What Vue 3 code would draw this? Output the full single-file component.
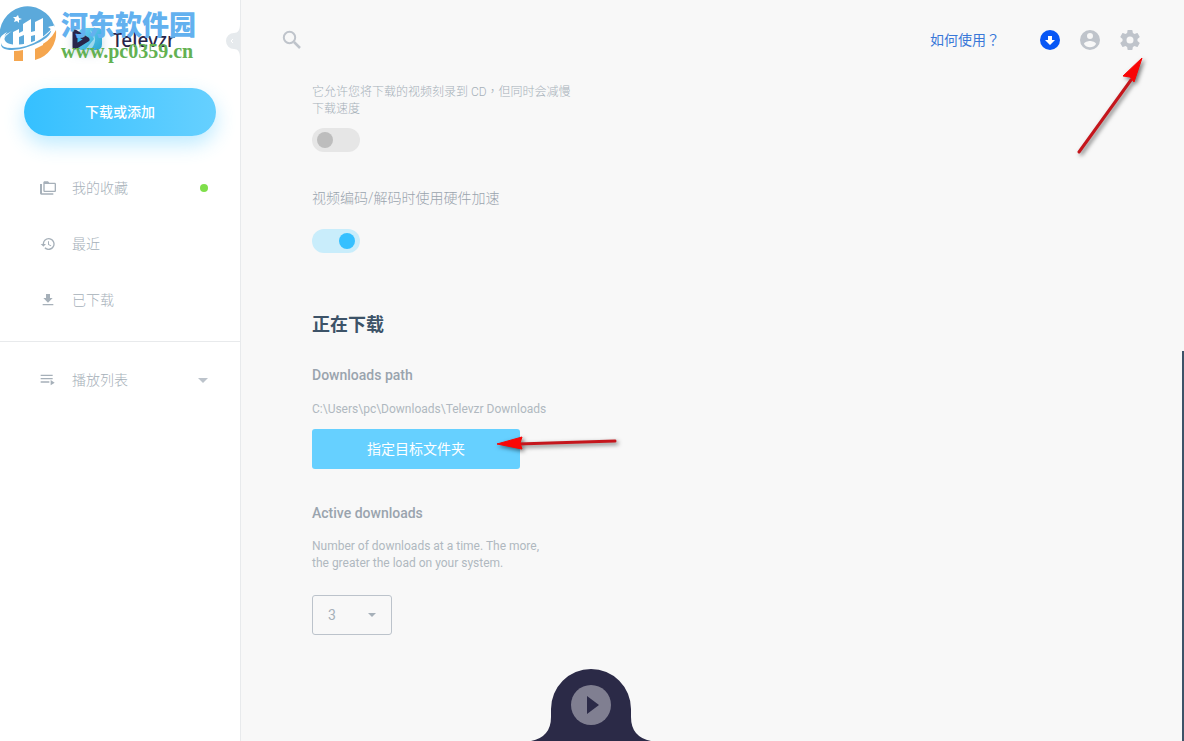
<script setup>
import { ref } from 'vue'

const burnToDisc = ref(false)
const hardware = ref(true)
const active = ref(3)
</script>

<template>
  <div class="app">
    <aside class="sidebar">
      <div class="brand">
        <svg class="brand-mark" viewBox="0 0 40 40" aria-hidden="true">
          <defs>
            <linearGradient id="mark" x1="0" y1="0" x2="1" y2="1">
              <stop offset="0" stop-color="#6fd3f8" />
              <stop offset="1" stop-color="#2aa5cf" />
            </linearGradient>
          </defs>
          <path d="M18 8h12q4 0 4 4v12q0 6-6 6H14q-4 0-4-4V16q0-8 8-8z" fill="url(#mark)" />
          <path d="M22 10q9 8 2 18-2 2-7 2l9-11z" fill="#d8f0f8" opacity=".6" />
          <path d="M7 12v15l12-7.500z" fill="#36b8ee" stroke="#29264a" stroke-width="5" stroke-linejoin="round" />
        </svg>
        <span class="brand-name">Televzr</span>
      </div>

      <button class="add" type="button">下载或添加</button>

      <nav class="nav">
        <a class="item" href="#collection">
          <svg viewBox="0 0 24 24"><path d="M3 6H0v14c0 1.100.9 2 2 2h18v-2H3V6zm19-2h-8l-2-2H7c-1.100 0-2 .9-2 2v12c0 1.100.9 2 2 2h15c1.100 0 2-.9 2-2V6c0-1.100-.9-2-2-2zm0 12H7V6h15v10z" /></svg>
          <span>我的收藏</span><i class="dot"></i>
        </a>
        <a class="item" href="#recent">
          <svg viewBox="0 0 24 24"><path d="M13 3a9 9 0 0 0-9 9H1l3.890 3.890.07.14L9 12H6a7 7 0 1 1 2.060 4.940l-1.420 1.420A9 9 0 1 0 13 3zm-1 5v5l4.280 2.540.72-1.210-3.500-2.080V8H12z" /></svg>
          <span>最近</span>
        </a>
        <a class="item" href="#downloaded">
          <svg viewBox="0 0 24 24"><path d="M19 9h-4V3H9v6H5l7 7 7-7zM4 18v2h16v-2H4z" /></svg>
          <span>已下载</span>
        </a>
      </nav>
      <nav class="nav lists">
        <a class="item" href="#playlists">
          <svg viewBox="0 0 24 24"><path d="M1 4h18v2H1zM1 9h18v2H1zM1 14h13v2H1zM16 12l6 4-6 4z" /></svg>
          <span>播放列表</span>
          <svg class="caret" viewBox="0 0 10 5"><path d="M0 0h10L5 5z" /></svg>
        </a>
      </nav>

      <button class="collapse" type="button" aria-label="Collapse">
        <svg viewBox="0 0 16 34"><path d="M16 0c0 6-2 9-6 9a8 8 0 1 0 0 16c4 0 6 3 6 9z" fill="#e6eaed" /><path d="M9 15l-2 2 2 2" fill="none" stroke="#fff" stroke-width="1" /></svg>
      </button>
    </aside>

    <main class="main">
      <header class="top">
        <button class="icon" type="button" aria-label="Search">
          <svg viewBox="0 0 24 24"><g fill="none" stroke="currentColor" stroke-width="2"><circle cx="9.500" cy="9.500" r="5.700" /><path d="M14 14l6 6" stroke-width="2.500" /></g></svg>
        </button>
        <div class="tools">
          <a class="help" href="#help">如何使用<span class="mid">？</span></a>
          <button class="icon" type="button" aria-label="Downloads">
            <svg viewBox="0 0 24 24"><circle cx="12" cy="12" r="10" fill="#0757f5" /><path d="M10 8h4v4h3l-5 5-5-5h3z" fill="#fff" /></svg>
          </button>
          <button class="icon" type="button" aria-label="Account">
            <svg viewBox="0 0 24 24"><path d="M12 2a10 10 0 1 0 0 20 10 10 0 0 0 0-20zm0 3a3 3 0 1 1 0 6 3 3 0 0 1 0-6zm0 14.200a7.200 7.200 0 0 1-6-3.220c.03-1.990 4-3.080 6-3.080s5.970 1.090 6 3.080a7.200 7.200 0 0 1-6 3.220z" /></svg>
          </button>
          <button class="icon" type="button" aria-label="Settings">
            <svg viewBox="0 0 24 24"><path d="M19.430 12.980c.04-.32.07-.64.07-.98s-.03-.66-.07-.98l2.110-1.650c.19-.15.24-.42.12-.64l-2-3.460c-.12-.22-.39-.3-.61-.22l-2.490 1c-.52-.4-1.080-.73-1.690-.98l-.38-2.650A.488.488 0 0 0 14 2h-4c-.25 0-.46.18-.49.42l-.38 2.650c-.61.25-1.170.59-1.690.98l-2.490-1c-.23-.09-.49 0-.61.22l-2 3.460c-.13.22-.07.49.12.64l2.110 1.650c-.04.32-.07.65-.07.98s.03.66.07.98l-2.110 1.650c-.19.15-.24.42-.12.64l2 3.460c.12.22.39.3.61.22l2.490-1c.52.4 1.080.73 1.690.98l.38 2.650c.03.24.24.42.49.42h4c.25 0 .46-.18.49-.42l.38-2.650c.61-.25 1.170-.59 1.690-.98l2.490 1c.23.09.49 0 .61-.22l2-3.460c.12-.22.07-.49-.12-.64l-2.110-1.650zM12 15.500a3.500 3.500 0 1 1 0-7 3.500 3.500 0 0 1 0 7z" /></svg>
          </button>
        </div>
        <svg class="arrow-up" viewBox="0 0 80 110" aria-hidden="true">
          <path d="M7 98L59 26" stroke="#c5161c" stroke-width="3" stroke-linecap="round" />
          <path d="M70 4L51 22l7 1 4 5z" fill="#f80606" stroke="#f80606" />
        </svg>
      </header>

      <section class="settings">
        <label class="note" for="burn">它允许您将下载的视频刻录到 CD<span class="mid">，</span>但同时会减慢下载速度</label>
        <input id="burn" v-model="burnToDisc" class="switch" type="checkbox" />
        <label class="name first" for="hw">视频编码/解码时使用硬件加速</label>
        <input id="hw" v-model="hardware" class="switch second" type="checkbox" />

        <h2>正在下载</h2>
        <h3 class="name">Downloads path</h3>
        <p class="note path">C:\Users\pc\Downloads\Televzr Downloads</p>
        <div class="target">
          <button class="choose" type="button">指定目标文件夹</button>
          <svg class="arrow-left" viewBox="0 0 130 24" aria-hidden="true">
            <path d="M22 12L119 9" stroke="#c5161c" stroke-width="3" stroke-linecap="round" />
            <path d="M1 12L26 5l-2 6 2 6z" fill="#f80606" stroke="#f80606" />
          </svg>
        </div>
        <label class="name active" for="count">Active downloads</label>
        <p class="note narrow">Number of downloads at a time. The more, the greater the load on your system.</p>
        <div class="pick">
          <select id="count" v-model="active">
            <option v-for="n in 5" :key="n" :value="n">{{ n }}</option>
          </select>
          <svg viewBox="0 0 8 4" aria-hidden="true"><path d="M0 0h8L4 4z" /></svg>
        </div>
      </section>
    </main>

    <div class="scroll"></div>

    <button class="player" type="button" aria-label="Play">
      <svg viewBox="0 0 122 72">
        <path d="M0 72Q20 68 20 48V40a40 40 0 0 1 80 0v8q0 20 20 24z" fill="#2b2a47" />
        <circle cx="60" cy="36" r="20" fill="#807f91" />
        <path d="M56 27v18l12-9z" fill="#2b2a47" />
      </svg>
    </button>

    <div class="watermark">
      <svg viewBox="0 0 58 64" aria-hidden="true">
        <path d="M0 39A28 28 0 0 1 54 25Q46 38 29 43 12 47 6 42 2 38 7 32 0 36 0 39z" fill="#5ba9db" />
        <path d="M56 30A28 28 0 0 1 35 60V48Q50 42 56 30zM14 51q5 0 9-1v11h-9z" fill="#f5a64f" />
        <path d="M13 32l6-3v19l-6 1zM23 24l8-5v42h-7V35l-5 2v-4l4-2zM35 22l8-4v27l-8 4V35l-4 1v-4l4-1z" fill="#fff" />
        <path d="M12 31Q1 38 5 43q6 5 24 1 20-5 26-20 1 12-19 21-17 8-30 3-8-4-2-11 3-4 8-6z" fill="#fff" />
        <path d="M1 43q0 5 11 5 15 0 29-9 12-8 14-15-1 10-15 18-14 7-28 8Q0 50 1 43z" fill="#5ba9db" />
        <path d="M48 27q6-2 7 0-1 5-7 10 6-8 0-10z" fill="#fff" />
        <path d="M18 15l1 3 3 1-3 1v3l-2-2-3 1 1-3-2-2h3z" fill="#fff" />
      </svg>
      <div class="marks">
        <span class="site">河东软件园</span>
        <span class="url">www.pc0359.cn</span>
      </div>
    </div>
  </div>
</template>

<style>
body {
  margin: 0;
}
</style>

<style scoped>
.app {
  position: relative;
  display: flex;
  min-height: 100vh;
  overflow: hidden;
  background: #f8f8f8;
  color: #a6b0b9;
  font-family: Roboto, "Noto Sans CJK SC", sans-serif;
  font-size: 14px;
  line-height: 20px;
  text-spacing-trim: space-all;
}
.app * {
  box-sizing: border-box;
}
svg {
  display: block;
  fill: currentColor;
}
button,
select {
  margin: 0;
  padding: 0;
  border: 0;
  background: none;
  color: inherit;
  font: inherit;
  cursor: pointer;
}
a {
  color: inherit;
  text-decoration: none;
}
.sidebar {
  position: relative;
  flex: none;
  width: 241px;
  border-right: 1px solid #e8eaec;
  background: #fff;
}
.brand {
  display: flex;
  align-items: center;
  gap: 4px;
  height: 80px;
  padding-left: 68px;
}
.brand-mark {
  width: 40px;
  height: 40px;
  filter: drop-shadow(0 4px 5px #2e6b9940);
}
.brand-name {
  color: #29264a;
  font: 500 19px/24px "Noto Sans", sans-serif;
}
.add {
  display: block;
  width: 192px;
  height: 48px;
  margin: 8px 24px 24px;
  border-radius: 24px;
  background: linear-gradient(90deg, #35c0ff, #66d0ff);
  box-shadow: 0 8px 20px #35c0ff55;
  color: #fff;
  font-weight: 500;
}
.nav {
  padding-bottom: 13px;
}
.lists {
  padding-top: 10px;
  border-top: 1px solid #e8eaec;
}
.item {
  display: flex;
  align-items: center;
  gap: 16px;
  height: 56px;
  padding: 0 32px 0 40px;
  font-weight: 300;
}
.item svg {
  width: 16px;
  height: 16px;
}
.dot {
  width: 8px;
  height: 8px;
  margin-left: auto;
  border-radius: 50%;
  background: #7fdf4b;
}
.item .caret {
  width: 10px;
  height: 5px;
  margin-left: auto;
  color: #bcc3cb;
}
.collapse {
  position: absolute;
  top: 24px;
  right: 0;
  width: 16px;
  height: 34px;
}
.main {
  flex: 1;
  min-width: 0;
}
.top {
  position: relative;
  display: flex;
  align-items: center;
  justify-content: space-between;
  height: 80px;
  padding: 0 42px 0 39px;
  color: #bfc4cb;
}
.icon svg {
  width: 24px;
  height: 24px;
}
.tools {
  display: flex;
  align-items: center;
  gap: 16px;
}
.help {
  margin-right: 22px;
  color: #3a78d8;
}
.arrow-up,
.arrow-left {
  position: absolute;
  fill: none;
  filter: drop-shadow(2px 2px 2px #0008);
  pointer-events: none;
}
.arrow-up {
  top: 54px;
  right: 32px;
  width: 80px;
  height: 110px;
}
.settings {
  display: flex;
  flex-direction: column;
  align-items: flex-start;
  padding: 4px 24px 80px 71px;
}
.note {
  max-width: 264px;
  margin: 0;
  color: #b0b8c0;
  font-size: 12px;
  line-height: 17px;
}
.settings label.note {
  color: #a6b0b9;
  font-weight: 300;
}
.mid {
  font-family: "Noto Sans CJK TC", sans-serif;
  line-height: 0;
}
.name {
  margin: 0;
  color: #9aa4ae;
  font-size: 14px;
  font-weight: 500;
}
.first {
  margin-top: 36px;
  font-weight: 300;
}
.switch {
  display: flex;
  align-items: center;
  appearance: none;
  width: 48px;
  height: 24px;
  margin: 10px 0 0;
  padding: 0 5px;
  border-radius: 12px;
  background: #e6e6e6;
}
.switch::before {
  content: "";
  width: 16px;
  height: 16px;
  border-radius: 50%;
  background: #bdbdbd;
}
.switch:checked {
  justify-content: flex-end;
  background: #c9edfb;
}
.switch:checked::before {
  background: #35c0ff;
}
.second {
  margin-top: 21px;
}
h2 {
  margin: 60px 0 28px;
  color: #3d5368;
  font-size: 18px;
  font-weight: 700;
  line-height: 24px;
}
.path {
  margin-top: 16px;
}
.target {
  position: relative;
  margin-top: 11px;
}
.choose {
  display: block;
  width: 208px;
  height: 40px;
  border-radius: 3px;
  background: #66d0ff;
  color: #fff;
}
.arrow-left {
  top: 3px;
  left: 184px;
  width: 130px;
  height: 24px;
}
.active {
  margin-top: 34px;
}
.narrow {
  max-width: 240px;
  margin-top: 15px;
}
.pick {
  position: relative;
  margin-top: 23px;
}
.pick select {
  appearance: none;
  width: 80px;
  height: 40px;
  padding: 0 15px;
  border: 1px solid #bcc3cb;
  border-radius: 3px;
}
.pick svg {
  position: absolute;
  top: 18px;
  right: 16px;
  width: 8px;
  height: 4px;
  pointer-events: none;
}
.scroll {
  position: absolute;
  top: 351px;
  right: 0;
  bottom: 0;
  width: 2px;
  background: #3d5368;
}
.player {
  position: absolute;
  bottom: 0;
  left: calc(50% - 61px);
  width: 122px;
  height: 72px;
}
.watermark {
  position: absolute;
  top: 0;
  left: 0;
  display: flex;
  gap: 3px;
  pointer-events: none;
}
.watermark svg {
  width: 58px;
  height: 64px;
}
.marks {
  display: flex;
  flex-direction: column;
  padding-top: 9px;
}
.site {
  color: #63b1ef;
  font: 900 27px/30px "Noto Sans CJK SC", sans-serif;
}
.url {
  color: #63b152;
  font: 700 20px/24px "Liberation Serif", serif;
}
</style>
